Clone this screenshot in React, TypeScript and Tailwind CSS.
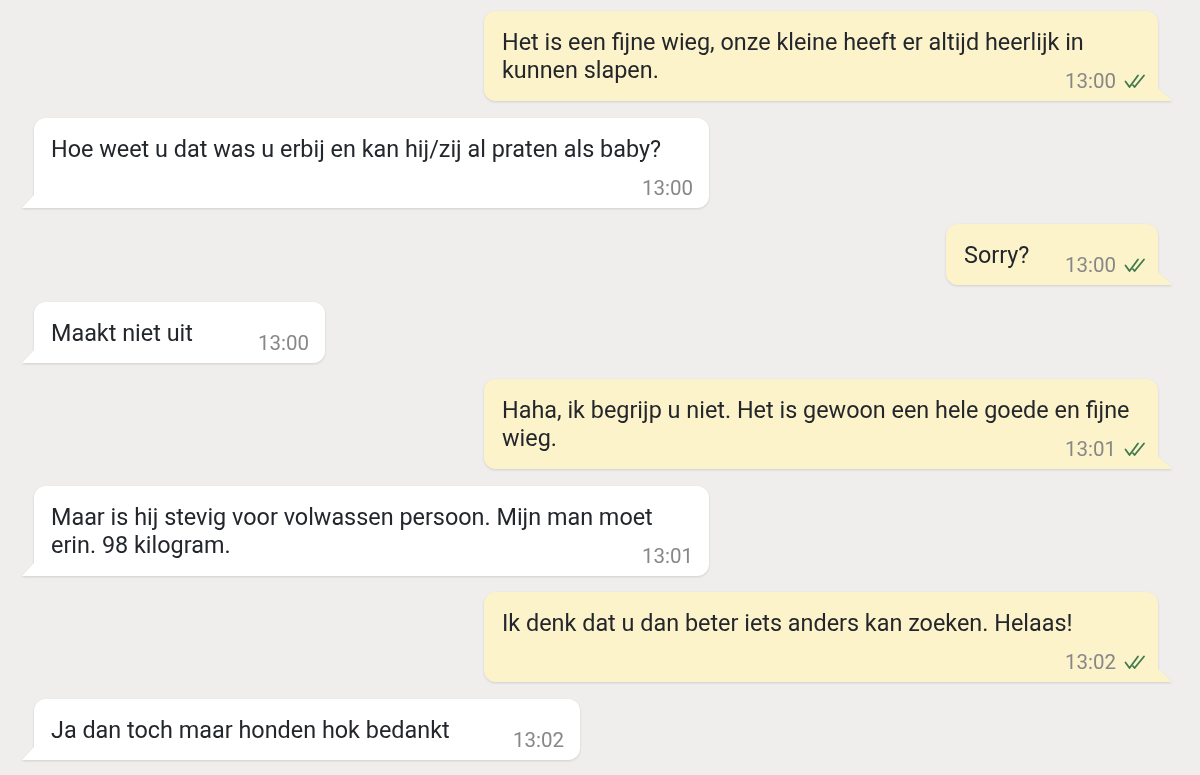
import React from "react";

type Msg = {
  side: "l" | "r";
  lines: string[];
  time: string;
  mode: "inline" | "wrap" | "below";
  width: string;
};

const msgs: Msg[] = [
  { side: "r", lines: ["Het is een fijne wieg, onze kleine heeft er altijd heerlijk in", "kunnen slapen."], time: "13:00", mode: "wrap", width: "w-[674px]" },
  { side: "l", lines: ["Hoe weet u dat was u erbij en kan hij/zij al praten als baby?"], time: "13:00", mode: "below", width: "w-[675px]" },
  { side: "r", lines: ["Sorry?"], time: "13:00", mode: "inline", width: "w-[212px]" },
  { side: "l", lines: ["Maakt niet uit"], time: "13:00", mode: "inline", width: "w-[291px]" },
  { side: "r", lines: ["Haha, ik begrijp u niet. Het is gewoon een hele goede en fijne", "wieg."], time: "13:01", mode: "wrap", width: "w-[674px]" },
  { side: "l", lines: ["Maar is hij stevig voor volwassen persoon. Mijn man moet", "erin. 98 kilogram."], time: "13:01", mode: "wrap", width: "w-[675px]" },
  { side: "r", lines: ["Ik denk dat u dan beter iets anders kan zoeken. Helaas!"], time: "13:02", mode: "below", width: "w-[674px]" },
  { side: "l", lines: ["Ja dan toch maar honden hok bedankt"], time: "13:02", mode: "inline", width: "w-[546px]" },
];

function Checks() {
  return (
    <svg width="24" height="16" viewBox="0 0 24 16" className="ml-[8px] mb-[1px]" fill="none">
      <path d="M1.5 8.5 L5.5 14 L14 2.5" stroke="#3f7a4c" strokeWidth="1.8" strokeLinecap="round" strokeLinejoin="round" />
      <path d="M9 12.2 L10.6 14 L20 2.5" stroke="#3f7a4c" strokeWidth="1.8" strokeLinecap="round" strokeLinejoin="round" />
    </svg>
  );
}

function Bubble({ m }: { m: Msg }) {
  const right = m.side === "r";
  const bg = right ? "bg-[#fdf3cb]" : "bg-white";
  const fill = right ? "#fdf3cb" : "#ffffff";
  const timeMargin = m.mode === "inline" ? "mt-[-14px]" : m.mode === "wrap" ? "mt-[-13px]" : "mt-[15px]";
  return (
    <div className={`flex ${right ? "justify-end pr-[42px]" : "justify-start pl-[34px]"}`}>
      <div className={`relative ${m.width} [filter:drop-shadow(0_1px_1px_rgba(0,0,0,0.13))]`}>
        <div
          className={`${bg} ${right ? "rounded-tl-[12px] rounded-tr-[12px] rounded-bl-[12px] pl-[18px] pr-[10px]" : "rounded-tl-[12px] rounded-tr-[12px] rounded-br-[12px] pl-[17px] pr-[16px]"} pt-[17px] pb-[10px]`}
        >
          <p className="text-[23.4px] leading-[28px] text-[#23272c] whitespace-nowrap">
            {m.lines.map((l, i) => (
              <React.Fragment key={i}>
                {i > 0 && <br />}
                {l}
              </React.Fragment>
            ))}
          </p>
          <div className={`flex justify-end items-center h-[20px] ${timeMargin}`}>
            <span className="text-[20.5px] leading-[20px] text-[#878787]">{m.time}</span>
            {right && <Checks />}
          </div>
        </div>
        {right ? (
          <svg className="absolute bottom-0 right-[-14px]" width="14" height="13" viewBox="0 0 14 13">
            <path d="M0 0 L14 13 L0 13 Z" fill={fill} />
          </svg>
        ) : (
          <svg className="absolute bottom-0 left-[-12px]" width="12" height="13" viewBox="0 0 12 13">
            <path d="M12 0 L0 13 L12 13 Z" fill={fill} />
          </svg>
        )}
      </div>
    </div>
  );
}

export default function App() {
  return (
    <div className="w-[1200px] h-[775px] overflow-hidden bg-[#efeeec] font-['Roboto',sans-serif] flex flex-col gap-[16.5px] pt-[11px]">
      {msgs.map((m, i) => (
        <Bubble key={i} m={m} />
      ))}
    </div>
  );
}
